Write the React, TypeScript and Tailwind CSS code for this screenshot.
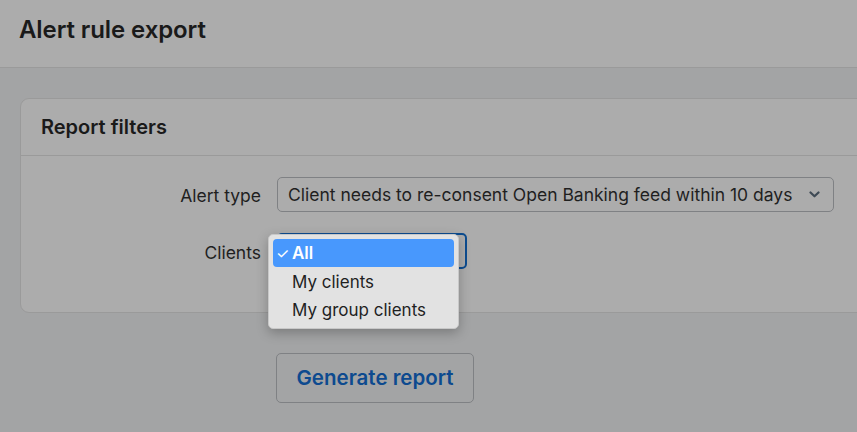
import React from "react";

export default function App() {
  return (
    <div
      className="relative w-[857px] h-[432px] overflow-hidden bg-[#a3a4a5] text-[#1c1c1c]"
      style={{ fontFamily: "Inter, 'Noto Sans', sans-serif" }}
    >
      <header className="h-[68px] bg-[#acacac] border-b border-[#9a9a9a] flex items-center px-[19px]">
        <h1 className="text-[24px] font-semibold tracking-[-0.1px] text-[#1a1a1a] -mt-[8px]">
          Alert rule export
        </h1>
      </header>
      <main className="pt-[30px] pl-[20px]">
        <section className="w-[900px] rounded-[9px] border border-[#9a9a9a] bg-[#acacac]">
          <div className="h-[57px] flex items-center px-[20px] border-b border-[#9a9a9a]">
            <h2 className="text-[20px] font-semibold text-[#1a1a1a]">Report filters</h2>
          </div>
          <div className="pt-[21px] pb-[43px] flex flex-col gap-[21px]">
            <div className="flex items-center">
              <label className="w-[240px] pt-[3px] text-right text-[17.5px] text-[#1f1f1f]">Alert type</label>
              <div className="ml-[16px] w-[557px] h-[35px] rounded-[5px] border border-[#7f8184] flex items-center justify-between pl-[10px] pr-[13px]">
                <span className="pt-[2px] text-[17.5px] text-[#1f1f1f]">
                  Client needs to re-consent Open Banking feed within 10 days
                </span>
                <svg width="11" height="7" viewBox="0 0 11 7" fill="none">
                  <path d="M1.5 1.5 L5.5 5.3 L9.5 1.5" stroke="#3e4a55" strokeWidth="2.2" strokeLinecap="round" strokeLinejoin="round" />
                </svg>
              </div>
            </div>
            <div className="flex items-center">
              <label className="w-[240px] pt-[4px] text-right text-[17.5px] text-[#1f1f1f]">Clients</label>
              <div className="ml-[16px] w-[190px] h-[36px] rounded-[5px] border-2 border-[#0d4c8f]" />
            </div>
          </div>
        </section>
        <button className="mt-[40px] ml-[256px] w-[198px] h-[50px] rounded-[5px] border border-[#7f8184] text-[20.5px] font-semibold text-[#0d4a8f]">
          Generate report
        </button>
      </main>

      <div className="absolute left-[268px] top-[234px] w-[191px] h-[95px] rounded-[5px] bg-[#e2e2e2] border border-[#c8c8c8] shadow-[0_4px_12px_rgba(0,0,0,0.25)] p-[4px] text-[17px]">
        <div className="h-[28px] pt-[2px] rounded-[4px] bg-[#4898fd] text-white flex items-center pl-[3px]">
          <span className="w-[16px] text-[15px]">✓</span>
          <span className="font-semibold">All</span>
        </div>
        <div className="h-[28px] pt-[3px] flex items-center pl-[19px] text-[#1f1f1f]">My clients</div>
        <div className="h-[28px] pt-[3px] flex items-center pl-[19px] text-[#1f1f1f]">My group clients</div>
      </div>
    </div>
  );
}
